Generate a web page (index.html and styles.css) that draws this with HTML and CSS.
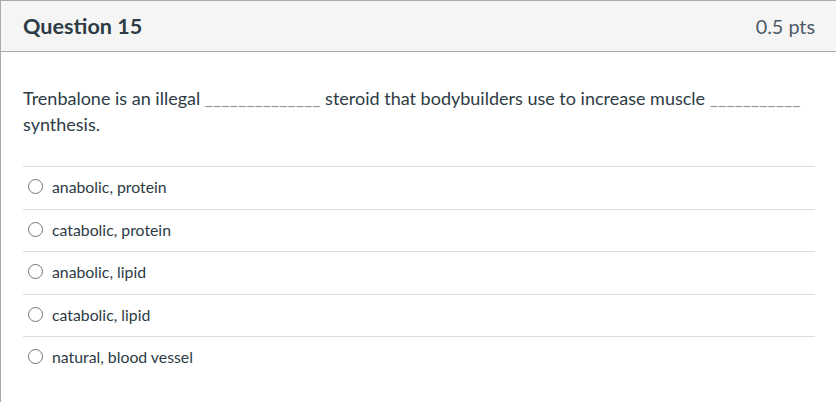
FILE: index.html
```html
<!DOCTYPE html>
<html lang="en">
<head>
    <meta charset="UTF-8">
    <meta name="viewport" content="width=device-width, initial-scale=1.0">
    <title>Question 15</title>
    <link rel="stylesheet" href="styles.css">
</head>
<body>
    <div class="question">
        <div class="header">
            <h2 class="title">Question 15</h2>
            <span class="points">0.5 pts</span>
        </div>
        <div class="content">
            <p class="text">Trenbalone is an illegal <span class="blank">______________</span> steroid that bodybuilders use to increase muscle <span class="blank">___________</span> synthesis.</p>
            <div class="answers">
                <label class="answer"><span class="radio"></span>anabolic, protein</label>
                <label class="answer"><span class="radio"></span>catabolic, protein</label>
                <label class="answer"><span class="radio"></span>anabolic, lipid</label>
                <label class="answer"><span class="radio"></span>catabolic, lipid</label>
                <label class="answer"><span class="radio"></span>natural, blood vessel</label>
            </div>
        </div>
    </div>
</body>
</html>
```

FILE: styles.css
```css
body {
    margin: 0;
    font-family: Lato, "Open Sans", sans-serif;
    color: #2d3b45;
    overflow: hidden;
}

.question {
    border: 1px solid #aaaaaa;
    border-right: none;
    border-bottom: none;
    height: 420px;
}

.header {
    display: flex;
    align-items: center;
    justify-content: space-between;
    height: 50px;
    padding: 0 21px 0 22px;
    background-color: #f5f5f5;
    border-bottom: 1px solid #aaaaaa;
}

.title {
    margin: 0;
    font-size: 21.6px;
    font-weight: bold;
}

.points {
    font-size: 19.8px;
    color: #4b5a66;
}

.content {
    padding: 33px 21px 0 22px;
}

.text {
    margin: 0 0 29px;
    font-size: 18px;
    line-height: 26px;
}

.blank {
    color: #8b969e;
}

.answer {
    display: flex;
    align-items: center;
    height: 39.5px;
    padding-bottom: 2px;
    border-top: 1px solid #dddddd;
    font-size: 15.8px;
}

.radio {
    width: 13px;
    height: 13px;
    margin: 0 9px 0 5px;
    border: 1px solid #6b7780;
    border-radius: 50%;
}
```
